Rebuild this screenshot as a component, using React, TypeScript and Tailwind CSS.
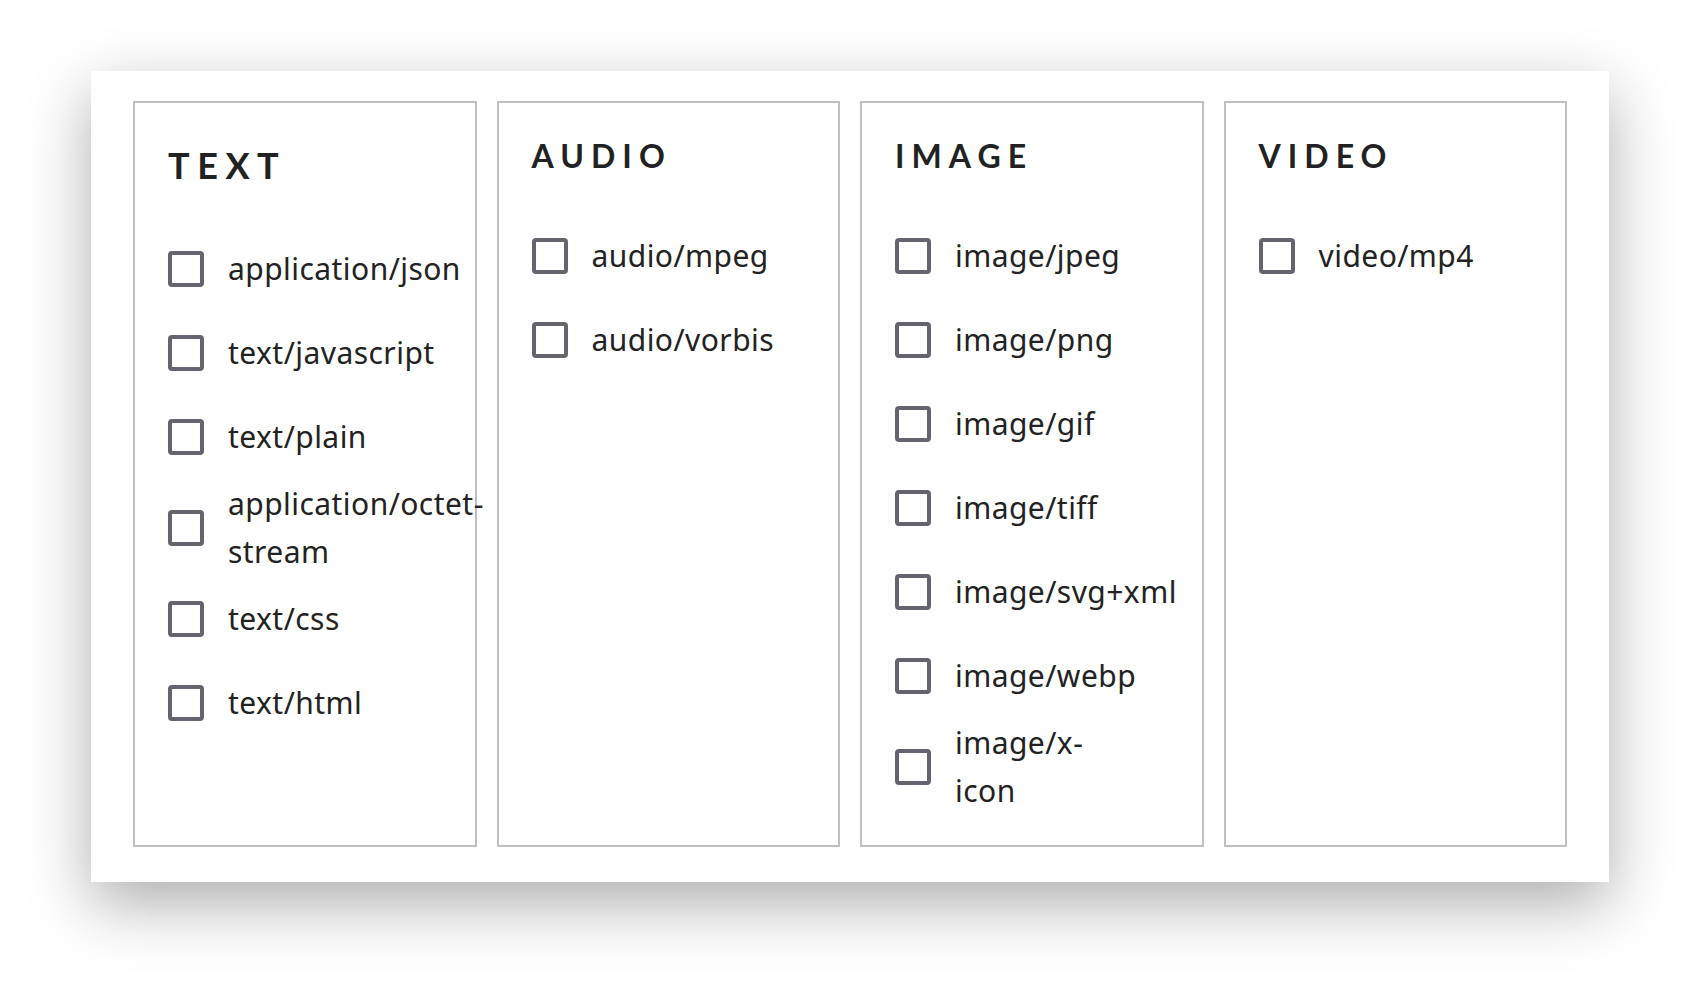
import React from "react";

type Group = { title: string; items: string[][]; big?: boolean };

const groups: Group[] = [
  {
    title: "Text",
    big: true,
    items: [
      ["application/json"],
      ["text/javascript"],
      ["text/plain"],
      ["application/octet-", "stream"],
      ["text/css"],
      ["text/html"],
    ],
  },
  { title: "Audio", items: [["audio/mpeg"], ["audio/vorbis"]] },
  {
    title: "Image",
    items: [
      ["image/jpeg"],
      ["image/png"],
      ["image/gif"],
      ["image/tiff"],
      ["image/svg+xml"],
      ["image/webp"],
      ["image/x-", "icon"],
    ],
  },
  { title: "Video", items: [["video/mp4"]] },
];

function MimeOption({ lines }: { lines: string[] }) {
  return (
    <label className="flex min-h-[84px] items-center gap-[24px] py-px">
      <input
        type="checkbox"
        className="h-[36px] w-[36px] shrink-0 appearance-none rounded-[4px] border-4 border-[#66636f] bg-white"
      />
      <span className="whitespace-nowrap text-[30px] leading-[48px] tracking-[0.015em] text-[#222]">
        {lines.map((line, i) => (
          <React.Fragment key={line}>
            {i > 0 && <br />}
            {line}
          </React.Fragment>
        ))}
      </span>
    </label>
  );
}

function MimeGroup({ group }: { group: Group }) {
  return (
    <fieldset className="min-w-0 border-2 border-[#bfbfbf] px-[33px] pt-[34px] pb-[29px]">
      <h3
        className={
          group.big
            ? "mt-[7px] mb-[40px] font-['Lato',sans-serif] text-[36px] leading-[1.2] font-bold tracking-[0.21em] text-[#222] uppercase"
            : "mb-[39px] font-['Lato',sans-serif] text-[32px] leading-[1.2] font-bold tracking-[0.22em] text-[#222] uppercase"
        }
      >
        {group.title}
      </h3>
      <div className="flex flex-col">
        {group.items.map((lines) => (
          <MimeOption key={lines.join("")} lines={lines} />
        ))}
      </div>
    </fieldset>
  );
}

export default function App() {
  return (
    <div className="min-h-screen bg-white pt-[71px] font-['Noto_Sans',sans-serif]">
      <div className="mx-auto w-[1518px] bg-white px-[42px] pt-[30px] pb-[35px] shadow-[0_22px_60px_rgba(0,0,0,0.32)]">
        <div className="grid grid-cols-4 gap-5">
          {groups.map((g) => (
            <MimeGroup key={g.title} group={g} />
          ))}
        </div>
      </div>
    </div>
  );
}
